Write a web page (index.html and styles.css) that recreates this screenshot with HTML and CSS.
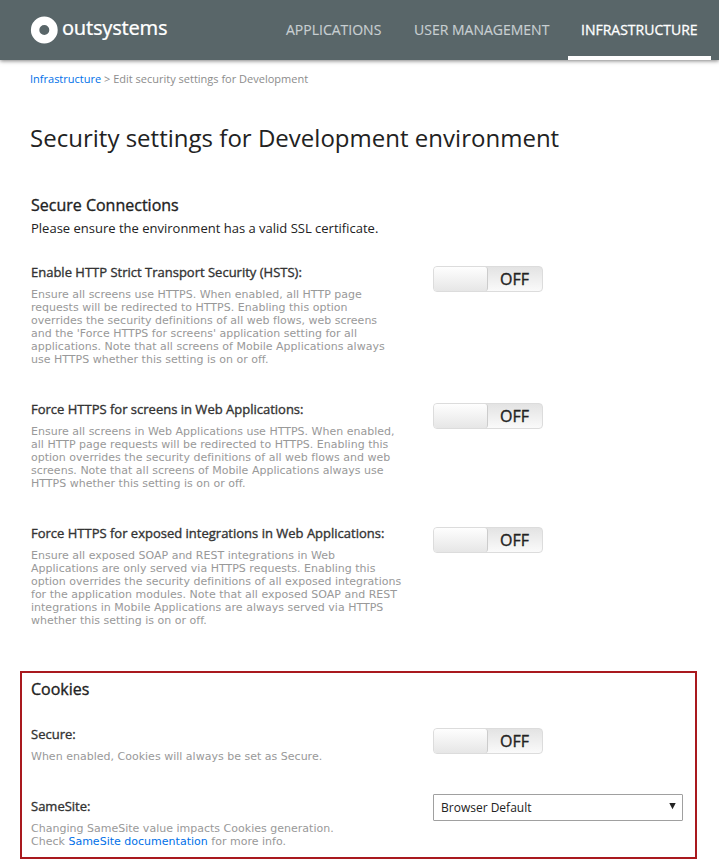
FILE: index.html
```html
<!DOCTYPE html>
<html lang="en">
<head>
<meta charset="utf-8">
<title>Security settings for Development environment</title>
<link rel="stylesheet" href="styles.css">
</head>
<body>
<header class="header">
  <div class="logo">
    <svg class="logo-mark" width="28" height="28" viewBox="0 0 28 28"><circle cx="14.3" cy="14" r="9.2" fill="none" stroke="#fff" stroke-width="8.4"/></svg>
    <span class="logo-text">outsystems</span>
  </div>
  <nav class="nav">
    <a class="nav-item nav-apps">APPLICATIONS</a>
    <a class="nav-item nav-users">USER MANAGEMENT</a>
    <a class="nav-item nav-infra active">INFRASTRUCTURE</a>
  </nav>
</header>
<main class="content">
  <div class="breadcrumb"><a class="link">Infrastructure</a> &gt; Edit security settings for Development</div>
  <h1 class="title"><span>Security settings for Development environment</span></h1>
  <section class="secure">
    <h2 class="section-title">Secure Connections</h2>
    <p class="intro">Please ensure the environment has a valid SSL certificate.</p>
    <div class="row">
      <div class="info">
        <h3 class="label">Enable HTTP Strict Transport Security (HSTS):</h3>
        <p class="desc">Ensure all screens use HTTPS. When enabled, all HTTP page<br>requests will be redirected to HTTPS. Enabling this option<br>overrides the security definitions of all web flows, web screens<br>and the 'Force HTTPS for screens' application setting for all<br>applications. Note that all screens of Mobile Applications always<br>use HTTPS whether this setting is on or off.</p>
      </div>
      <div class="toggle"><span class="knob"></span><span class="state">OFF</span></div>
    </div>
    <div class="row">
      <div class="info">
        <h3 class="label">Force HTTPS for screens in Web Applications:</h3>
        <p class="desc">Ensure all screens in Web Applications use HTTPS. When enabled,<br>all HTTP page requests will be redirected to HTTPS. Enabling this<br>option overrides the security definitions of all web flows and web<br>screens. Note that all screens of Mobile Applications always use<br>HTTPS whether this setting is on or off.</p>
      </div>
      <div class="toggle"><span class="knob"></span><span class="state">OFF</span></div>
    </div>
    <div class="row">
      <div class="info">
        <h3 class="label">Force HTTPS for exposed integrations in Web Applications:</h3>
        <p class="desc">Ensure all exposed SOAP and REST integrations in Web<br>Applications are only served via HTTPS requests. Enabling this<br>option overrides the security definitions of all exposed integrations<br>for the application modules. Note that all exposed SOAP and REST<br>integrations in Mobile Applications are always served via HTTPS<br>whether this setting is on or off.</p>
      </div>
      <div class="toggle"><span class="knob"></span><span class="state">OFF</span></div>
    </div>
  </section>
  <section class="cookies">
    <h2 class="section-title">Cookies</h2>
    <div class="row">
      <div class="info">
        <h3 class="label">Secure:</h3>
        <p class="desc">When enabled, Cookies will always be set as Secure.</p>
      </div>
      <div class="toggle"><span class="knob"></span><span class="state">OFF</span></div>
    </div>
    <div class="row">
      <div class="info">
        <h3 class="label">SameSite:</h3>
        <p class="desc">Changing SameSite value impacts Cookies generation.<br>Check <a class="link">SameSite documentation</a> for more info.</p>
      </div>
      <div class="select"><span>Browser Default</span><svg width="7" height="7" viewBox="0 0 7 7"><path d="M.3 0h6.4L3.5 6.3z" fill="#222"/></svg></div>
    </div>
  </section>
</main>
</body>
</html>
```
FILE: styles.css
```css
* { box-sizing: border-box; }
body { margin: 0; background: #fff; font-family: "Open Sans", sans-serif; color: #222; }
h1, h2, h3, p { margin: 0; font-weight: 400; white-space: nowrap; }
.header { height: 60px; background: #596669; box-shadow: 0 1px 4px rgba(0,0,0,.5); display: flex; justify-content: space-between; padding: 0 8px 0 30px; }
.logo { display: flex; align-items: center; gap: 4px; color: #fff; }
.logo-text { font-family: "Noto Sans", sans-serif; font-size: 20px; line-height: 28px; margin-top: -5px; letter-spacing: -.25px; -webkit-text-stroke: .2px #fff; }
.nav { display: flex; }
.nav-item { height: 60px; line-height: 60px; padding: 0 13px; font-size: 14px; color: #c8cfd2; white-space: nowrap; -webkit-text-stroke: .15px #c8cfd2; }
.nav-apps { width: 122px; margin-right: 6px; }
.nav-users { width: 162px; margin-right: 5px; }
.nav-infra { width: 143px; }
.nav-item.active { color: #fff; border-bottom: 4px solid #fff; -webkit-text-stroke: .3px #fff; }
.content { padding: 9px 0 0 20px; }
.breadcrumb { padding-left: 10px; height: 20px; line-height: 20px; font-size: 11px; color: #8c8c8c; white-space: nowrap; }
.link { color: #0070e8; }
.title { padding-left: 10px; margin-top: 29px; height: 40px; line-height: 40px; font-size: 24px; letter-spacing: .015px; }
.secure { padding: 35px 0 0 11px; }
.section-title { height: 24px; line-height: 24px; font-size: 16px; -webkit-text-stroke: .35px #222; }
.intro { height: 20px; line-height: 20px; font-size: 13px; margin: 1px 0 24px; }
.row { display: flex; align-items: flex-start; padding-bottom: 33px; }
.info { width: 402px; }
.label { height: 20px; line-height: 20px; font-size: 13px; color: #333; -webkit-text-stroke: .35px #333; }
.desc { margin-top: 6px; font-family: "DejaVu Sans", sans-serif; font-size: 11px; line-height: 13px; letter-spacing: .01px; color: #999; }
.toggle { width: 110px; height: 26px; margin-top: 4px; display: flex; border: 1px solid #dcdcdc; border-radius: 4px; background: linear-gradient(#e3e3e3, #fafafa); }
.knob { width: 54px; height: 24px; border-right: 1px solid #ccc; border-radius: 3px; background: linear-gradient(#fefefe, #e6e6e6); }
.state { flex: 1; padding-left: 12px; font-size: 16px; line-height: 25px; -webkit-text-stroke: .35px #222; }
.cookies { width: 677px; height: 188px; margin-top: 11px; border: 2px solid #a9191e; padding: 4px 0 0 9px; }
.cookies .section-title { margin-bottom: 23px; }
.select { width: 250px; height: 27px; margin-top: -2px; border: 1px solid #a0a0a0; border-radius: 1px; display: flex; align-items: center; justify-content: space-between; padding: 0 6px 0 7px; font-size: 12px; }
.select svg { margin-top: -2px; }
```
